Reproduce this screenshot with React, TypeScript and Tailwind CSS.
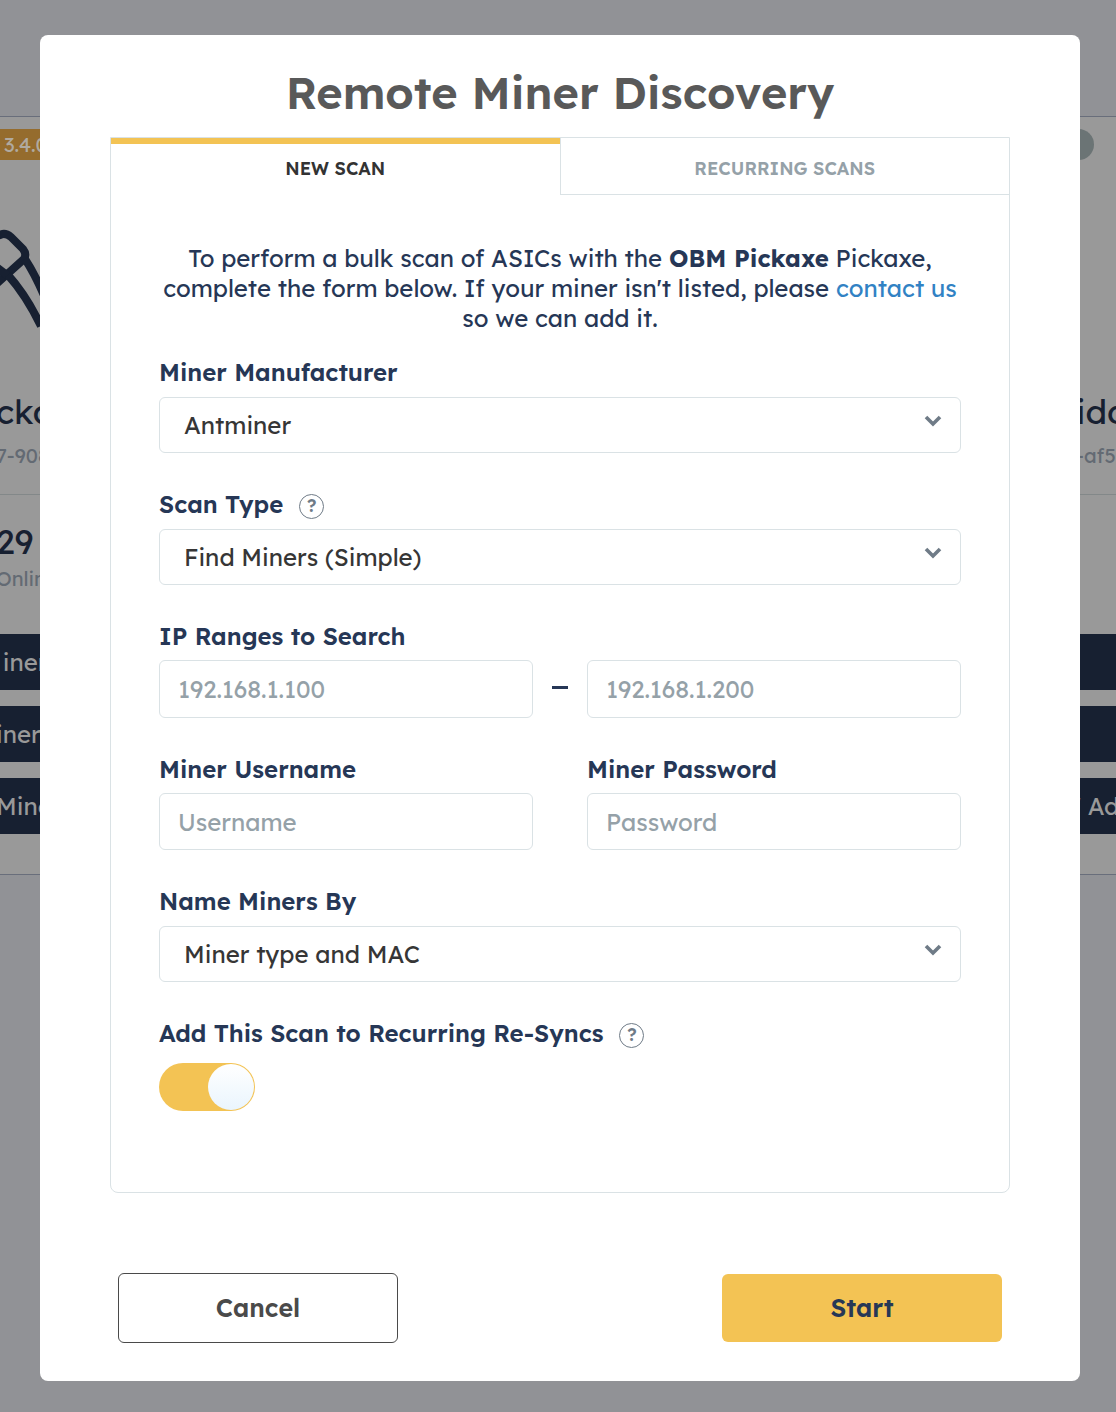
import { useState } from "react";
import type { ReactNode } from "react";

const MANUFACTURERS = ["Antminer"];
const SCAN_TYPES = ["Find Miners (Simple)"];
const NAMINGS = ["Miner type and MAC"];

interface CardProps {
  badge: ReactNode;
  art?: ReactNode;
  name: string;
  id: string;
  count?: string;
  status?: string;
  actions: string[];
}

// Edge of a dashboard card, dimmed behind the dialog.
function DimmedCard({ badge, art, name, id, count, status, actions }: CardProps) {
  return (
    <div className="w-13 overflow-hidden whitespace-nowrap border-y border-[#696e7b] bg-[#999999] pb-10 text-[#172031]">
      <div className="mt-3 h-[31px]">{badge}</div>
      <div className="mt-17 h-25">{art}</div>
      <div className="mt-16 h-10 text-[34px] leading-10">{name}</div>
      <div className="mt-3 h-6 text-xl leading-6 text-[#636a73]">{id}</div>
      <div className="mt-[26px] h-px bg-[#838889]" />
      <div className="mt-7 h-10 text-[34px] leading-[38px]">{count}</div>
      <div className="mt-1 h-6 text-xl leading-6 text-[#636a73]">{status}</div>
      <div className="mt-[43px] flex flex-col gap-4">
        {actions.map((action, i) => (
          <div key={i} className="h-14 bg-[#172031] text-2xl leading-14 text-[#999999]">
            {action}
          </div>
        ))}
      </div>
    </div>
  );
}

function PickaxeArt() {
  return (
    <svg width="44" height="100" viewBox="-4 0 44 100" fill="none" stroke="#172031" strokeWidth="8" strokeLinejoin="round" aria-hidden>
      <path d="M-5 9 L0 7 Q5 4 11 9 L23 21 Q27 26 24 31 L-5 57" />
      <path d="M-5 38 L8 48" />
      <path d="M25 31 Q35 46 46 72" />
      <path d="M8 47 Q26 67 41 98" />
    </svg>
  );
}

function Help({ label }: { label: string }) {
  return (
    <button
      type="button"
      aria-label={label}
      className="mt-1 flex size-[25px] items-center justify-center rounded-full border border-[#6f7b87] text-lg font-semibold leading-none text-[#6f7b87]"
    >
      ?
    </button>
  );
}

interface SelectFieldProps {
  id: string;
  label: string;
  options: string[];
  help?: boolean;
}

function SelectField({ id, label, options, help }: SelectFieldProps) {
  return (
    <div>
      <div className="flex h-[30px] items-center gap-4">
        <label htmlFor={id} className="text-2xl font-semibold text-[#263756]">
          {label}
        </label>
        {help && <Help label={`About ${label}`} />}
      </div>
      <div className="relative mt-2.5">
        <select
          id={id}
          className="h-14 w-full appearance-none rounded-md border border-[#dae2e5] bg-white px-6 text-2xl text-[#363636]"
        >
          {options.map(o => (
            <option key={o}>{o}</option>
          ))}
        </select>
        <svg
          width="18"
          height="12"
          viewBox="0 0 18 12"
          fill="none"
          stroke="#6f7b87"
          strokeWidth="3.6"
          className="pointer-events-none absolute right-[19px] top-[18px]"
          aria-hidden
        >
          <path d="M2 2 L9 9 L16 2" />
        </svg>
      </div>
    </div>
  );
}

interface TextFieldProps {
  id: string;
  label: string;
  placeholder: string;
  type?: string;
}

const inputClass =
  "w-full min-w-0 rounded-md border border-[#dae2e5] bg-white px-[18px] text-2xl text-[#363636] placeholder:text-[#95a1a8]";

function TextField({ id, label, placeholder, type = "text" }: TextFieldProps) {
  return (
    <div className="min-w-0 flex-1">
      <label htmlFor={id} className="block text-2xl font-semibold leading-[30px] text-[#263756]">
        {label}
      </label>
      <input id={id} type={type} placeholder={placeholder} className={`${inputClass} mt-[9px] h-[57px]`} />
    </div>
  );
}

export default function App() {
  const [recurring, setRecurring] = useState(true);

  return (
    <div className="relative min-h-screen bg-[#919296] font-['Lexend','Inter',sans-serif]">
      <div className="absolute inset-0 flex items-start justify-between overflow-hidden pt-[116px]" aria-hidden>
        <div className="-ml-1">
          <DimmedCard
            badge={<div className="h-full bg-[#956c2d] pl-2 text-xl leading-[31px] text-[#b0aaa0]">3.4.0</div>}
            art={<PickaxeArt />}
            name="cka"
            id="7-908"
            count="29"
            status="Onlin"
            actions={["\u00a0iner", "iner", "Mine"]}
          />
        </div>
        <div className="-mr-3">
          <DimmedCard
            badge={<div className="h-full w-[18px] rounded-r-full bg-[#6b7475]" />}
            name="idd"
            id="-af5"
            actions={["", "", "' Ad"]}
          />
        </div>
      </div>

      <div className="relative pb-[31px] pl-10 pr-9 pt-[35px]">
        <div role="dialog" aria-labelledby="dialog-title" className="rounded-lg bg-white px-[70px] pb-[38px] pt-[27px]">
          <h1 id="dialog-title" className="text-center text-[45px] font-semibold leading-[60px] text-[#595959]">
            Remote Miner Discovery
          </h1>

          <div className="mt-[15px] rounded-b-lg border border-[#dae2e5]">
            <div role="tablist" className="flex h-[57px] text-lg font-semibold">
              <button
                type="button"
                role="tab"
                aria-selected="true"
                className="flex-1 border-t-6 border-[#f3c354] pb-0.5 text-[#333333]"
              >
                NEW SCAN
              </button>
              <button
                type="button"
                role="tab"
                aria-selected="false"
                className="flex-1 border-b border-l border-[#dae2e5] pt-1.5 text-[#95a1a8]"
              >
                RECURRING SCANS
              </button>
            </div>

            <form className="px-12 pb-[81px] pt-12" onSubmit={e => e.preventDefault()}>
              <p className="text-center text-2xl leading-[30px] text-[#263756]">
                To perform a bulk scan of ASICs with the <strong className="font-bold">OBM Pickaxe</strong> Pickaxe,
                <br />
                complete the form below. If your miner isn't listed, please{" "}
                <a href="#contact" className="text-[#3182c4]">
                  contact us
                </a>
                <br />
                so we can add it.
              </p>

              <div className="mt-6 flex flex-col gap-9">
                <SelectField id="manufacturer" label="Miner Manufacturer" options={MANUFACTURERS} />
                <SelectField id="scan-type" label="Scan Type" options={SCAN_TYPES} help />

                <div>
                  <label htmlFor="ip-from" className="block text-2xl font-semibold leading-[30px] text-[#263756]">
                    IP Ranges to Search
                  </label>
                  <div className="mt-[9px] flex items-center">
                    <input id="ip-from" placeholder="192.168.1.100" className={`${inputClass} h-[58px]`} />
                    <div className="mx-[19px] mb-1 h-[3px] w-4 shrink-0 bg-[#263756]" />
                    <input aria-label="Range end" placeholder="192.168.1.200" className={`${inputClass} h-[58px]`} />
                  </div>
                </div>

                <div className="flex gap-[54px]">
                  <TextField id="username" label="Miner Username" placeholder="Username" />
                  <TextField id="password" label="Miner Password" placeholder="Password" type="password" />
                </div>

                <SelectField id="naming" label="Name Miners By" options={NAMINGS} />

                <div>
                  <div className="flex h-[30px] items-center gap-4">
                    <label htmlFor="recurring" className="text-2xl font-semibold text-[#263756]">
                      Add This Scan to Recurring Re-Syncs
                    </label>
                    <Help label="About recurring re-syncs" />
                  </div>
                  <input
                    id="recurring"
                    type="checkbox"
                    checked={recurring}
                    onChange={e => setRecurring(e.target.checked)}
                    className="mt-[15px] flex h-12 w-24 appearance-none rounded-full bg-[#dae2e5] p-px before:size-[46px] before:rounded-full before:bg-linear-to-b before:from-white before:to-[#eaf5fd] checked:justify-end checked:bg-[#f3c354]"
                  />
                </div>
              </div>
            </form>
          </div>

          <div className="mt-20 flex items-center justify-between px-2 text-[25px] font-semibold">
            <button type="button" className="h-[70px] w-70 rounded-md border border-[#4a4a4a] text-[#4a4a4a]">
              Cancel
            </button>
            <button type="button" className="h-17 w-70 rounded-md bg-[#f3c354] text-[#263756]">
              Start
            </button>
          </div>
        </div>
      </div>
    </div>
  );
}
